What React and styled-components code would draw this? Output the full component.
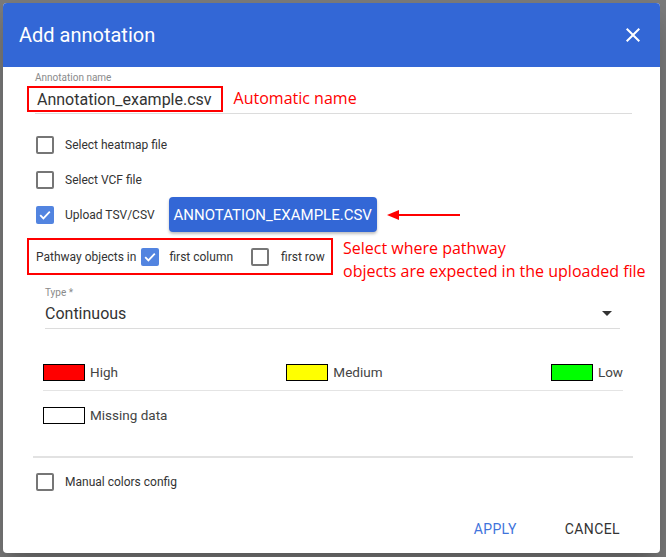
import React from "react";
import styled, { createGlobalStyle } from "styled-components";

const Global = createGlobalStyle`
  html, body { margin: 0; padding: 0; }
  body {
    background: #7a7a7a;
    font-family: Roboto, "Liberation Sans", sans-serif;
    width: 666px;
    height: 557px;
    overflow: hidden;
  }
`;

const Page = styled.div`
  padding: 3px 6px 4px 3px;
  height: 557px;
  box-sizing: border-box;
`;

const Dialog = styled.div`
  width: 657px;
  height: 550px;
  background: #fff;
  border-radius: 4px;
  overflow: hidden;
  display: flex;
  flex-direction: column;
  box-shadow: 0 11px 15px -7px rgba(0,0,0,0.2), 0 24px 38px 3px rgba(0,0,0,0.14);
`;

const Header = styled.div`
  height: 64px;
  flex: none;
  background: #3367d6;
  display: flex;
  align-items: center;
  justify-content: space-between;
  padding: 0 15px 0 16px;
  color: #fff;
`;

const Title = styled.h2`
  margin: 0;
  font-size: 20px;
  font-weight: 400;
  font-family: Roboto, sans-serif;
`;

const CloseBtn = styled.button`
  border: 0;
  background: transparent;
  padding: 0;
  width: 24px;
  height: 24px;
  display: flex;
  color: #fff;
`;

const Body = styled.div`
  flex: 1;
  padding: 4px 27px 0 24px;
  display: flex;
  flex-direction: column;
`;

const Field = styled.div`
  margin-left: ${(p) => p.$indent}px;
  width: ${(p) => p.$width}px;
  margin-top: ${(p) => p.$top || 0}px;
`;

const FieldLabel = styled.div`
  font-size: 10px;
  line-height: 12px;
  color: #8a8a8a;
  height: 12px;
  margin-top: 1px;
`;

const InputRow = styled.div`
  display: flex;
  align-items: center;
  height: ${(p) => p.$h}px;
  border-bottom: 1px solid #dcdcdc;
  font-size: 16px;
  color: #333;
`;

const Highlight = styled.div`
  margin-left: -8px;
  margin-top: 2px;
  height: 26px;
  box-sizing: border-box;
  border: 2px solid #f00;
  padding: 0 9px 0 8px;
  display: flex;
  align-items: center;
  align-self: flex-start;
  white-space: nowrap;
`;

const Note = styled.div`
  font-family: "Open Sans", sans-serif;
  color: #f00;
  font-size: 16px;
  line-height: 23px;
  white-space: nowrap;
  align-self: flex-start;
  margin-left: ${(p) => p.$gap || 0}px;
  margin-top: ${(p) => p.$top || 0}px;
`;

const CheckRow = styled.div`
  display: flex;
  align-items: center;
  height: 35px;
  margin-left: 9px;
  margin-top: ${(p) => p.$top || 0}px;
`;

const Box = styled.span`
  width: 18px;
  height: 18px;
  box-sizing: border-box;
  border-radius: 2px;
  flex: none;
  display: flex;
  align-items: center;
  justify-content: center;
  border: ${(p) => (p.$checked ? "none" : "2px solid #767676")};
  background: ${(p) => (p.$checked ? "#5284e0" : "transparent")};
`;

const CheckLabel = styled.span`
  font-size: 12px;
  color: #333;
  white-space: nowrap;
  margin-left: ${(p) => p.$gap || 11}px;
  margin-right: ${(p) => p.$after || 0}px;
`;

const Checkbox = ({ checked, label, gap, after }) => (
  <>
    <Box $checked={checked}>
      {checked && (
        <svg width="14" height="14" viewBox="0 0 14 14">
          <path d="M2.2 7.2 L5.4 10.4 L11.8 3.6" stroke="#fff" strokeWidth="1.8" fill="none" />
        </svg>
      )}
    </Box>
    <CheckLabel $gap={gap} $after={after}>{label}</CheckLabel>
  </>
);

const FileButton = styled.button`
  margin-left: 14px;
  height: 35px;
  width: 208px;
  flex: none;
  border: 0;
  border-radius: 4px;
  background: #3367d6;
  color: #fff;
  font-family: Roboto, sans-serif;
  font-size: 15px;
  padding: 0;
  white-space: nowrap;
  box-shadow: 0 2px 3px rgba(0,0,0,0.25);
`;

const Arrow = styled.svg`
  margin-left: 10px;
  flex: none;
`;

const PathwayWrap = styled.div`
  display: flex;
  align-items: flex-start;
  height: 37px;
  margin-top: 6px;
`;

const PathwayBox = styled.div`
  display: flex;
  align-items: center;
  flex: none;
  width: 306px;
  height: 37px;
  box-sizing: border-box;
  border: 2px solid #f00;
  padding-left: 7px;
`;

const PlainLabel = styled.span`
  font-size: 12px;
  color: #333;
  white-space: nowrap;
  margin-right: ${(p) => p.$gap || 0}px;
`;

const Triangle = styled.span`
  margin-left: auto;
  margin-right: 8px;
  width: 0;
  height: 0;
  border-left: 5px solid transparent;
  border-right: 5px solid transparent;
  border-top: 5px solid #333;
`;

const Legend = styled.div`
  margin: 25px 10px 0 16px;
  display: flex;
  flex-direction: column;
`;

const LegendRow = styled.div`
  display: flex;
  align-items: center;
  justify-content: space-between;
  height: ${(p) => p.$h}px;
  border-bottom: ${(p) => (p.$line ? "1px solid #e4e4e4" : "none")};
`;

const LegendItem = styled.div`
  display: flex;
  align-items: center;
`;

const Swatch = styled.span`
  width: 42px;
  height: 17px;
  box-sizing: border-box;
  border: 1px solid #000;
  background: ${(p) => p.$color};
`;

const LegendText = styled.span`
  margin-left: 5px;
  font-size: 13.5px;
  color: #444;
`;

const Divider = styled.div`
  margin: 17px 0 0 6px;
  height: 2px;
  background: #e2e2e2;
`;

const Actions = styled.div`
  display: flex;
  justify-content: flex-end;
  gap: 32px;
  padding: 0 5px 0 0;
  margin-top: 12px;
`;

const TextButton = styled.button`
  border: 0;
  background: transparent;
  padding: 0 8px;
  height: 36px;
  font-family: Roboto, sans-serif;
  font-size: 14px;
  letter-spacing: 0.4px;
  text-transform: uppercase;
  color: ${(p) => (p.$primary ? "#3f74dc" : "#333")};
`;

export default function App() {
  return (
    <>
      <Global />
      <Page>
        <Dialog>
          <Header>
            <Title>Add annotation</Title>
            <CloseBtn aria-label="close">
              <svg width="24" height="24" viewBox="0 0 24 24">
                <path fill="#fff" d="M19 6.41L17.59 5 12 10.59 6.41 5 5 6.41 10.59 12 5 17.59 6.41 19 12 13.41 17.59 19 19 17.59 13.41 12z" />
              </svg>
            </CloseBtn>
          </Header>
          <Body>
            <Field $indent={8} $width={597}>
              <FieldLabel>Annotation name</FieldLabel>
              <InputRow $h={29}>
                <Highlight>Annotation_example.csv</Highlight>
                <Note $gap={11} $top={3}>Automatic name</Note>
              </InputRow>
            </Field>

            <CheckRow $top={13}>
              <Checkbox label="Select heatmap file" />
            </CheckRow>
            <CheckRow>
              <Checkbox label="Select VCF file" />
            </CheckRow>
            <CheckRow>
              <Checkbox checked label="Upload TSV/CSV" />
              <FileButton>ANNOTATION_EXAMPLE.CSV</FileButton>
              <Arrow width="74" height="12" viewBox="0 0 74 12">
                <path d="M12 6 H73" stroke="#f00" strokeWidth="2" />
                <path d="M0 6 L12 1 L12 11 Z" fill="#f00" />
              </Arrow>
            </CheckRow>

            <PathwayWrap>
              <PathwayBox>
                <PlainLabel $gap={5}>Pathway objects in</PlainLabel>
                <Checkbox checked label="first column" gap={10} after={18} />
                <Checkbox label="first row" gap={12} />
              </PathwayBox>
              <Note $gap={10} $top={-1}>
                Select where pathway
                <br />
                objects are expected in the uploaded file
              </Note>
            </PathwayWrap>

            <Field $indent={18} $width={575} $top={11}>
              <FieldLabel>Type *</FieldLabel>
              <InputRow $h={29}>
                Continuous
                <Triangle />
              </InputRow>
            </Field>

            <Legend>
              <LegendRow $h={36} $line>
                <LegendItem>
                  <Swatch $color="#ff0000" />
                  <LegendText>High</LegendText>
                </LegendItem>
                <LegendItem>
                  <Swatch $color="#ffff00" />
                  <LegendText>Medium</LegendText>
                </LegendItem>
                <LegendItem>
                  <Swatch $color="#00ff00" />
                  <LegendText>Low</LegendText>
                </LegendItem>
              </LegendRow>
              <LegendRow $h={48}>
                <LegendItem>
                  <Swatch $color="#ffffff" />
                  <LegendText>Missing data</LegendText>
                </LegendItem>
              </LegendRow>
            </Legend>

            <Divider />
            <CheckRow $top={6}>
              <Checkbox label="Manual colors config" />
            </CheckRow>

            <Actions>
              <TextButton $primary>Apply</TextButton>
              <TextButton>Cancel</TextButton>
            </Actions>
          </Body>
        </Dialog>
      </Page>
    </>
  );
}
